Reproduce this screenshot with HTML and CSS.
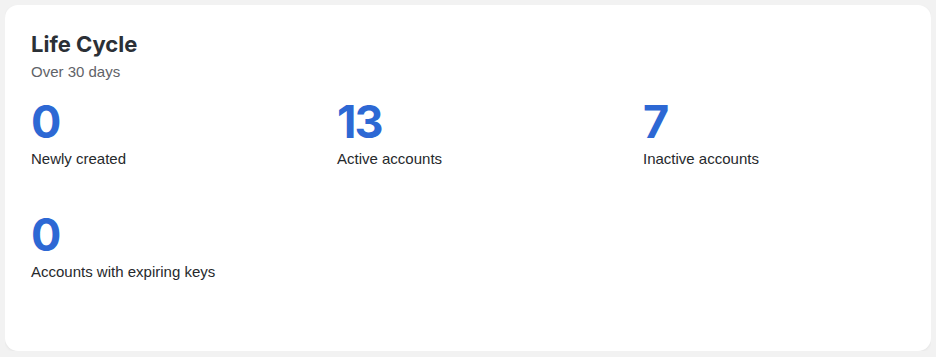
FILE: index.html
```html
<!DOCTYPE html>
<html lang="en">
<head>
  <meta charset="UTF-8">
  <meta name="viewport" content="width=device-width, initial-scale=1.0">
  <title>Life Cycle</title>
  <link rel="stylesheet" href="styles.css">
</head>
<body>
<div class="card">
  <h2 class="title">Life Cycle</h2>
  <div class="subtitle">Over 30 days</div>
  <div class="stats">
    <div class="stat">
      <div class="value">0</div>
      <div class="label">Newly created</div>
    </div>
    <div class="stat">
      <div class="value">13</div>
      <div class="label">Active accounts</div>
    </div>
    <div class="stat">
      <div class="value">7</div>
      <div class="label">Inactive accounts</div>
    </div>
    <div class="stat">
      <div class="value">0</div>
      <div class="label">Accounts with expiring keys</div>
    </div>
  </div>
</div>
</body>
</html>
```

FILE: styles.css
```css
* {
  margin: 0;
  padding: 0;
  box-sizing: border-box;
}
body {
  margin: 5px;
  background-color: #f2f2f2;
  font-family: "Liberation Sans", Arial, sans-serif;
}
.card {
  background-color: #fff;
  border-radius: 13px;
  box-shadow: 0 1px 3px rgba(0, 0, 0, 0.06);
  padding: 25px 26px 69px 26px;
}
.title {
  font-family: Inter, sans-serif;
  font-weight: 700;
  font-size: 22px;
  line-height: 28px;
  color: #2b3036;
}
.subtitle {
  margin-top: 4px;
  font-size: 15px;
  line-height: 20px;
  color: #5f6368;
}
.stats {
  margin-top: 17px;
  display: grid;
  grid-template-columns: repeat(3, 1fr);
  column-gap: 44px;
  row-gap: 43px;
}
.value {
  font-family: Inter, sans-serif;
  font-weight: 700;
  font-size: 45px;
  line-height: 45px;
  letter-spacing: -2px;
  color: #2d68d4;
}
.label {
  margin-top: 5px;
  font-size: 15px;
  line-height: 20px;
  color: #26292c;
}
```
